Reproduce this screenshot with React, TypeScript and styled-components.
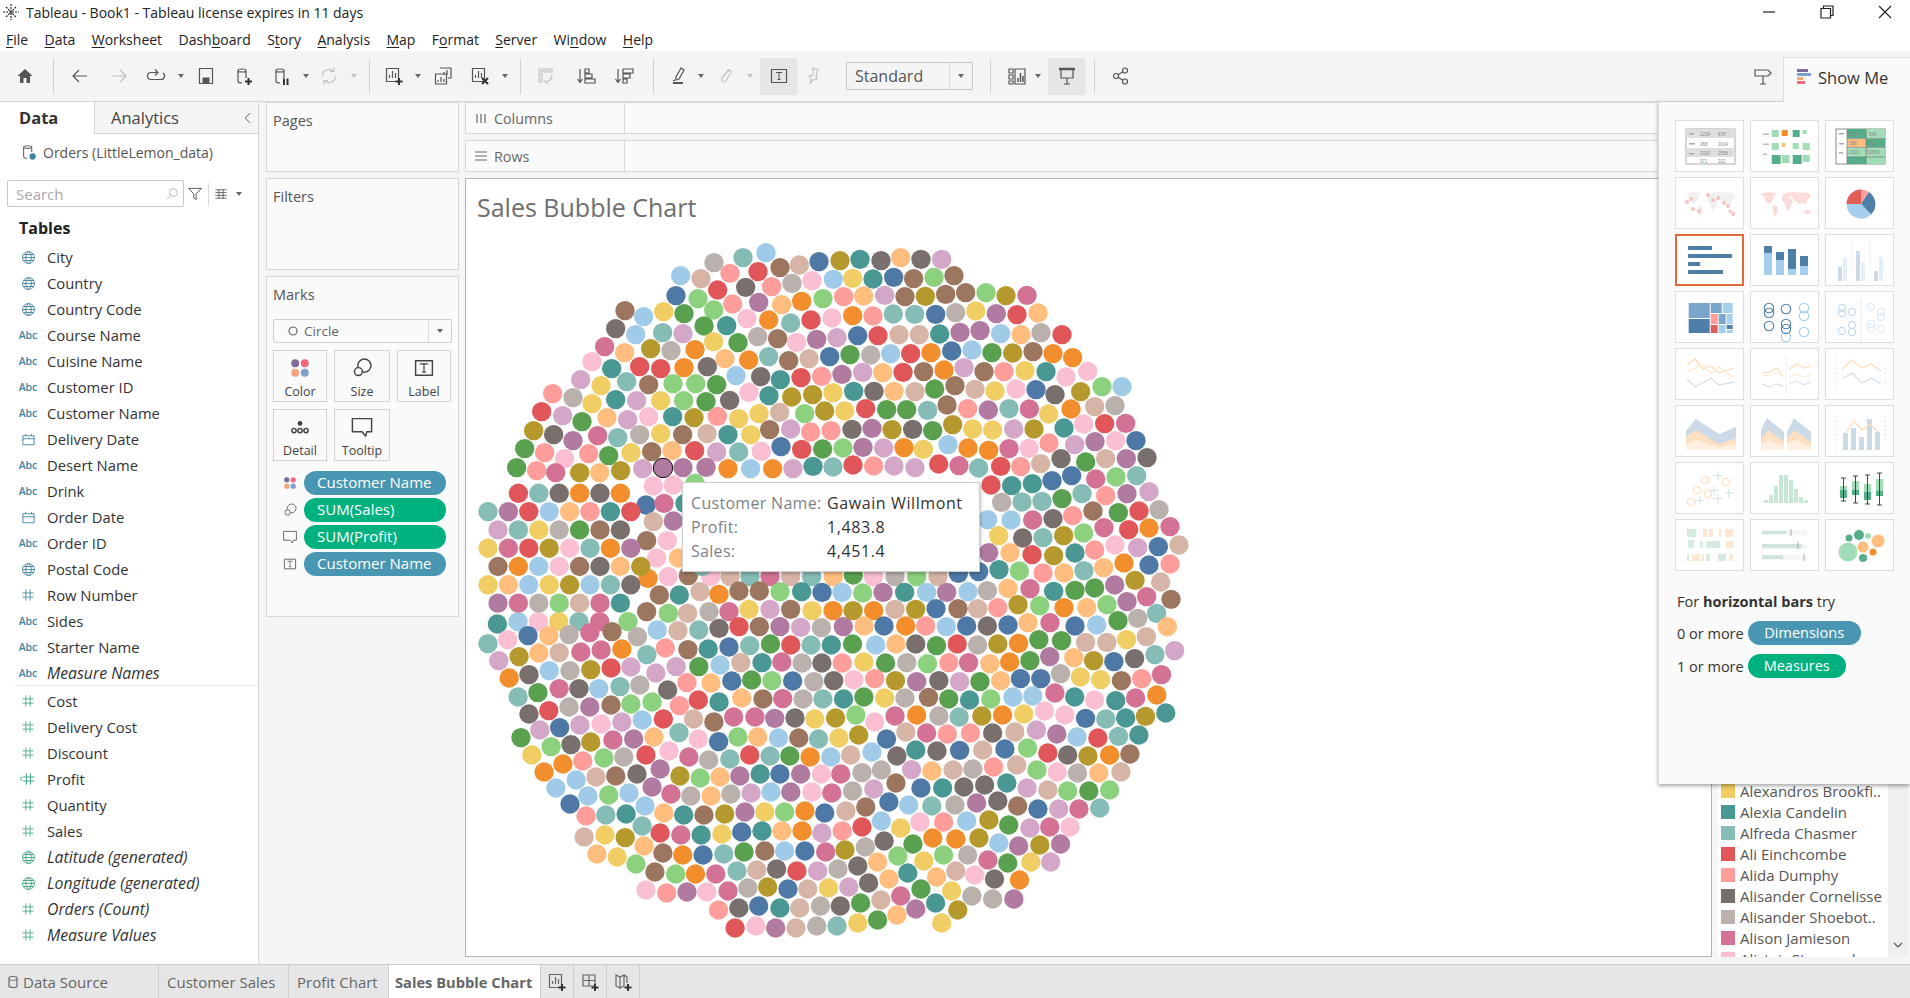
import React from 'react';
import styled, { createGlobalStyle } from 'styled-components';

const Global = createGlobalStyle`
    html, body { margin: 0; padding: 0; background: #fff; }
    body { font-family: 'Open Sans', 'Liberation Sans', sans-serif; overflow: hidden; }
`;

const Page = styled.div`
    width: 1910px;
    height: 998px;
    display: flex;
    flex-direction: column;
    position: relative;
    overflow: hidden;
    color: #333;
`;

const Svg = styled.svg`
    display: block;
    flex: none;
    fill: none;
    stroke: currentColor;
    stroke-width: 1.2;
`;

const Spacer = styled.span<{ $w: number }>`
    width: ${({ $w }) => $w}px;
    flex: none;
`;

/* title bar + menu */
const TitleBar = styled.div`
    height: 24px;
    display: flex;
    align-items: center;
    padding: 0 18px 0 2px;
    font-size: 14px;
    color: #222;
`;
const TitleText = styled.span`
    margin-left: 6px;
    flex: 1;
`;
const WinBtns = styled.div`
    display: flex;
    gap: 44px;
    color: #222;
`;
const Menu = styled.div`
    height: 27px;
    box-sizing: border-box;
    padding: 4px 0 0 6px;
    display: flex;
    align-items: center;
    gap: 16.4px;
    font-size: 14px;
    color: #222;
    u { text-underline-offset: 2px; }
`;

/* toolbar */
const Toolbar = styled.div`
    height: 51px;
    box-sizing: border-box;
    background: #f4f4f4;
    border-bottom: 1px solid #d6d6d6;
    display: flex;
    align-items: center;
    color: #555;
`;
const Slot = styled.div<{ $w: number; $off?: boolean; $on?: boolean }>`
    width: ${({ $w }) => $w}px;
    height: 37px;
    flex: none;
    display: flex;
    align-items: center;
    justify-content: center;
    color: ${({ $off }) => ($off ? '#c2c2c2' : '#555')};
    background: ${({ $on }) => ($on ? '#e6e6e6' : 'transparent')};
`;
const Sep = styled.span`
    width: 1px;
    height: 35px;
    background: #d2d2d2;
`;
const Caret = styled.span<{ $off?: boolean }>`
    width: 0;
    height: 0;
    flex: none;
    border-left: 3.5px solid transparent;
    border-right: 3.5px solid transparent;
    border-top: 4px solid ${({ $off }) => ($off ? '#c2c2c2' : '#666')};
`;
const Combo = styled.div`
    width: 127px;
    height: 28px;
    margin-left: 15px;
    box-sizing: border-box;
    flex: none;
    border: 1px solid #c8c8c8;
    border-radius: 2px;
    display: flex;
    align-items: center;
    font-size: 16px;
    color: #555;
`;
const ComboText = styled.span`
    flex: 1;
    padding-left: 8px;
`;
const ComboCaret = styled.span`
    width: 22px;
    height: 100%;
    border-left: 1px solid #dcdcdc;
    display: flex;
    align-items: center;
    justify-content: center;
`;
const Spring = styled.div`
    flex: 1;
`;
const ShowMeTab = styled.div`
    width: 127px;
    height: 45px;
    margin-top: 6px;
    align-self: flex-start;
    box-sizing: border-box;
    background: #fafafa;
    border-left: 1px solid #ddd;
    border-top: 1px solid #ddd;
    display: flex;
    align-items: center;
    gap: 5px;
    padding: 0 0 6px 11px;
    font-size: 16.5px;
    color: #333;
    flex: none;
    position: relative;
    z-index: 3;
`;

/* main */
const Main = styled.div`
    height: 862px;
    display: grid;
    grid-template-columns: 259px 206px 1fr;
    background: #f5f5f5;
`;
const DataPanel = styled.div`
    background: #fff;
    border-right: 1px solid #d4d4d4;
    display: flex;
    flex-direction: column;
    min-height: 0;
`;
const TabsRow = styled.div`
    height: 32px;
    display: flex;
    flex: none;
`;
const DataTab = styled.div`
    width: 94px;
    padding-left: 19px;
    box-sizing: border-box;
    font-size: 16.5px;
    font-weight: 700;
    color: #333;
    line-height: 31px;
`;
const AnalyticsTab = styled.div`
    flex: 1;
    box-sizing: border-box;
    padding-left: 16px;
    padding-right: 3px;
    background: #f5f5f5;
    border-left: 1px solid #d4d4d4;
    border-bottom: 1px solid #d4d4d4;
    font-size: 16.5px;
    color: #444;
    line-height: 31px;
    display: flex;
    justify-content: space-between;
    align-items: center;
`;
const SourceRow = styled.div`
    height: 36px;
    display: flex;
    align-items: center;
    gap: 5px;
    padding-left: 20px;
    font-size: 14px;
    color: #555;
    flex: none;
`;
const SearchRow = styled.div`
    height: 27px;
    margin: 10px 0 0 7px;
    display: flex;
    align-items: center;
    flex: none;
    color: #555;
`;
const SearchBox = styled.div`
    width: 177px;
    height: 27px;
    box-sizing: border-box;
    border: 1px solid #c8c8c8;
    border-radius: 2px;
    display: flex;
    align-items: center;
    justify-content: space-between;
    padding: 0 4px 0 8px;
    font-size: 15px;
    color: #aaa;
`;
const SearchSep = styled.span`
    width: 1px;
    height: 22px;
    background: #d8d8d8;
    margin: 0 5px;
`;
const GroupTitle = styled.div`
    margin: 9px 0 4px 19px;
    font-size: 16px;
    font-weight: 700;
    color: #222;
    line-height: 24px;
    flex: none;
`;
const FieldRow = styled.div<{ $italic?: boolean; $rule?: boolean }>`
    height: 26px;
    flex: none;
    display: flex;
    align-items: center;
    margin-left: 15px;
    font-size: ${({ $italic }) => ($italic ? 15.8 : 14.8)}px;
    color: #333;
    font-style: ${({ $italic }) => ($italic ? 'italic' : 'normal')};
    box-sizing: border-box;
    border-bottom: ${({ $rule }) => ($rule ? '1px solid #e3e3e3' : 'none')};
    margin-bottom: ${({ $rule }) => ($rule ? 2 : 0)}px;
`;
const FieldIcon = styled.span<{ $green?: boolean }>`
    width: 32px;
    flex: none;
    display: flex;
    justify-content: center;
    padding-right: 6px;
    box-sizing: border-box;
    font-size: 10.5px;
    font-weight: 600;
    font-style: normal;
    color: ${({ $green }) => ($green ? '#3da583' : '#3f83a3')};
`;

const MidColumn = styled.div`
    display: flex;
    flex-direction: column;
    gap: 6px;
    padding: 0 6px 0 7px;
`;
const Card = styled.div<{ $h: number }>`
    height: ${({ $h }) => $h}px;
    box-sizing: border-box;
    background: #fafafa;
    border: 1px solid #d8d8d8;
    padding: 8px 6px 0;
    font-size: 14.5px;
    color: #555;
    flex: none;
`;
const CardTitle = styled.div`
    line-height: 20px;
`;
const MarkSelect = styled.div`
    height: 24px;
    margin-top: 14px;
    box-sizing: border-box;
    border: 1px solid #d0d0d0;
    border-radius: 2px;
    display: flex;
    align-items: center;
    padding-left: 14px;
    gap: 6px;
    font-size: 13.5px;
    color: #666;
`;
const MarkSelectCaret = styled.span`
    margin-left: auto;
    width: 22px;
    height: 100%;
    border-left: 1px solid #dcdcdc;
    display: flex;
    align-items: center;
    justify-content: center;
`;
const MarkGrid = styled.div`
    display: grid;
    grid-template-columns: 54px 56px 54px;
    grid-auto-rows: 52px;
    gap: 7px;
    margin-top: 7px;
`;
const MarkBtn = styled.div`
    border: 1px solid #d4d4d4;
    display: flex;
    flex-direction: column;
    align-items: center;
    justify-content: flex-start;
    padding-top: 5px;
    gap: 3px;
    font-size: 12.5px;
    color: #444;
`;
const PillRows = styled.div`
    display: flex;
    flex-direction: column;
    gap: 3px;
    margin-top: 10px;
`;
const PillRow = styled.div`
    display: flex;
    align-items: center;
    height: 24px;
`;
const PillIcon = styled.span`
    width: 31px;
    display: flex;
    justify-content: center;
    padding-left: 3px;
    box-sizing: border-box;
    color: #666;
`;
const Pill = styled.span<{ $measure?: boolean }>`
    width: 142px;
    height: 24px;
    border-radius: 12px;
    background: ${({ $measure }) => ($measure ? '#00b180' : '#4996b2')};
    color: #fff;
    font-size: 15px;
    line-height: 23px;
    padding-left: 13px;
    box-sizing: border-box;
`;

const Work = styled.div`
    display: flex;
    flex-direction: column;
    min-width: 0;
    gap: 6px;
`;
const Shelves = styled.div`
    display: flex;
    flex-direction: column;
    gap: 6px;
`;
const Shelf = styled.div`
    height: 32px;
    box-sizing: border-box;
    background: #fafafa;
    border-top: 1px solid #d8d8d8;
    border-bottom: 1px solid #d8d8d8;
    border-left: 1px solid #d8d8d8;
    display: flex;
    flex: none;
`;
const ShelfLabel = styled.div`
    width: 159px;
    box-sizing: border-box;
    border-right: 1px solid #d8d8d8;
    display: flex;
    align-items: center;
    gap: 6px;
    padding-left: 8px;
    font-size: 14.3px;
    color: #666;
`;
const Stage = styled.div`
    display: flex;
    gap: 6px;
    height: 779px;
    flex: none;
`;
const Canvas = styled.div`
    width: 1247px;
    flex: none;
    box-sizing: border-box;
    background: #fff;
    border: 1px solid #b4b4b4;
    position: relative;
    overflow: hidden;
`;
const ChartTitle = styled.div`
    height: 62px;
    box-sizing: border-box;
    padding: 9px 0 0 11px;
    font-size: 25px;
    line-height: 38px;
    color: #6e6e6e;
`;
const Tip = styled.div`
    position: absolute;
    left: 216px;
    top: 303px;
    width: 298px;
    height: 90px;
    box-sizing: border-box;
    background: #fff;
    border: 1px solid #cfcfcf;
    box-shadow: 1px 2px 3px rgba(0, 0, 0, 0.25);
    padding: 8px 8px 0;
    display: grid;
    grid-template-columns: 136px 1fr;
    grid-auto-rows: 24px;
    align-items: center;
    font-size: 16px;
    letter-spacing: 0.3px;
    color: #7d828a;
`;
const TipValue = styled.span`
    color: #333;
    letter-spacing: 0.6px;
`;
const Legend = styled.div`
    width: 190px;
    flex: none;
    background: #fff;
    display: flex;
    overflow: hidden;
    position: relative;
`;
const LegendList = styled.div`
    flex: 1;
    padding: 602px 0 0 3px;
`;
const LegendRow = styled.div`
    height: 21px;
    display: flex;
    align-items: center;
    gap: 5px;
    font-size: 15px;
    color: #555;
    white-space: nowrap;
`;
const Swatch = styled.span<{ $c: string }>`
    width: 14px;
    height: 14px;
    flex: none;
    background: ${({ $c }) => $c};
`;
const ScrollBar = styled.div`
    width: 20px;
    background: #efefef;
    display: flex;
    align-items: flex-end;
    justify-content: center;
    padding-bottom: 6px;
    box-sizing: border-box;
    color: #555;
`;

/* show me overlay */
const ShowMe = styled.div`
    position: absolute;
    left: 1658px;
    top: 102px;
    width: 252px;
    height: 682px;
    box-sizing: border-box;
    background: #fafafa;
    border-left: 1px solid #ddd;
    box-shadow: 0 2px 4px rgba(0, 0, 0, 0.35);
    padding: 18px 0 0 16px;
    z-index: 2;
    font-size: 14.5px;
    color: #333;
`;
const ThumbGrid = styled.div`
    display: grid;
    grid-template-columns: repeat(3, 69px);
    grid-auto-rows: 52px;
    gap: 5px 6px;
`;
const Thumb = styled.div<{ $on?: boolean }>`
    box-sizing: border-box;
    background: #fff;
    border: ${({ $on }) => ($on ? '2px solid #e0683a' : '1px solid #dedede')};
    overflow: hidden;
`;
const ThumbArt = styled.svg`
    display: block;
    width: 69px;
    height: 52px;
`;
const Hint = styled.div`
    margin: 21px 0 1px 2px;
    line-height: 20px;
    b { font-weight: 700; }
`;
const HintRow = styled.div`
    display: flex;
    align-items: center;
    height: 24px;
    margin: 9px 0 0 2px;
`;
const HintPill = styled.span<{ $measure?: boolean; $w: number }>`
    width: ${({ $w }) => $w}px;
    height: 24px;
    margin-left: 4px;
    border-radius: 12px;
    background: ${({ $measure }) => ($measure ? '#00b180' : '#4996b2')};
    color: #fff;
    text-align: center;
    line-height: 23px;
    font-size: 14.5px;
`;

/* sheet tabs */
const SheetTabs = styled.div`
    height: 34px;
    box-sizing: border-box;
    background: #e6e6e6;
    border-top: 1px solid #cdcdcd;
    display: flex;
`;
const SheetTab = styled.div<{ $w: number; $on?: boolean }>`
    width: ${({ $w }) => $w}px;
    flex: none;
    box-sizing: border-box;
    display: flex;
    align-items: center;
    gap: 5px;
    padding-left: ${({ $on }) => ($on ? 6 : 8)}px;
    background: ${({ $on }) => ($on ? '#fff' : 'transparent')};
    border-right: 1px solid #cfcfcf;
    font-size: ${({ $on }) => ($on ? 14.7 : 15)}px;
    font-weight: ${({ $on }) => ($on ? 700 : 400)};
    color: #666;
`;
const AddTab = styled.div`
    width: 32px;
    flex: none;
    border-right: 1px solid #cfcfcf;
    display: flex;
    align-items: center;
    justify-content: center;
    color: #666;
`;

/* icons */
const Icon = ({ s = 20, sw = 1.2, children }: { s?: number; sw?: number; children: React.ReactNode }) => (
    <Svg width={s} height={s} viewBox="0 0 20 20" strokeWidth={sw}>
        {children}
    </Svg>
);
const Home = () => <Icon><path d="M10 3 2.5 10H5v7h3.5v-5h3v5H15v-7h2.5z" fill="currentColor" stroke="none" /></Icon>;
const Back = () => <Icon sw={1.6}><path d="M17 10H3.5M9 4l-6 6 6 6" /></Icon>;
const Fwd = () => <Icon sw={1.6}><path d="M3 10h13.5M11 4l6 6-6 6" /></Icon>;
const Cycle = () => <Icon><path d="M11 6.500H5a3.500 3.500 0 0 0 0 7h10a3.500 3.500 0 0 0 2-6.400M9 3.500l3 3-3 3" /></Icon>;
const Save = () => <Icon><path d="M3.500 2.500h13v15h-13z" /><path d="M6.500 11.500h7v6h-7z" fill="currentColor" stroke="none" /></Icon>;
const Db = ({ mark }: { mark: 'plus' | 'pause' }) => (
    <Icon>
        <path d="M4 4.500C4 2.500 12 2.500 12 4.500V12M4 4.500C4 6.500 12 6.500 12 4.500M4 4.500V15c0 1.500 2 2 4 2" />
        {mark === 'plus'
            ? <path d="M14.500 12v7M11 15.500h7" strokeWidth={2} stroke="#333" />
            : <path d="M12 12.500V19M15.500 12.500V19" strokeWidth={2} stroke="#333" />}
    </Icon>
);
const Refresh = () => <Icon><path d="M3.500 10a6.500 6.500 0 0 1 11-4.700M16.500 10a6.500 6.500 0 0 1-11 4.700M15 1.500v4h-4M5 18.500v-4h4" /></Icon>;
const NewSheet = () => <Icon><path d="M2.500 2.500h12v13h-12zM5.500 12V9M8.500 12V5M11.500 12V7" /><path d="M15 12v7M11.500 15.500h7" strokeWidth={2} stroke="#333" /></Icon>;
const DupSheet = () => <Icon><path d="M7 2h11v10H15M2.500 8h11v10h-11zM5 16v-2M8 16v-5M11 16v-3M11 9V6M14 9V4" /></Icon>;
const ClearSheet = () => <Icon><path d="M2.500 2.500h12v13h-12zM5.500 12V9M8.500 12V5M11.500 12V7" /><path d="m12 12 6 6M18 12l-6 6" strokeWidth={2} stroke="#333" /></Icon>;
const SwapAxes = () => <Icon><path d="M3 3h3v3H3zM8 3h3v3H8zM13 3h3v3h-3zM3 8h3v3H3zM3 13h3v3H3zM16 9c0 4-2 6-6 7M8 14l2 2.500L12 18" /></Icon>;
const SortAsc = () => <Icon sw={1.3}><path d="M4 3v13M1.500 13 4 16.500 6.500 13" /><path d="M9 3h4v4H9zM9 8h7v4H9zM9 13h10v4H9z" /></Icon>;
const SortDesc = () => <Icon sw={1.3}><path d="M4 3v13M1.500 13 4 16.500 6.500 13" /><path d="M9 3h10v4H9zM9 8h7v4H9zM9 13h4v4H9z" /></Icon>;
const Marker = () => <Icon><path d="m11 2 3 2-5 9-3 1v-3zM3 15l2-1" /><path d="M3 17h10" strokeWidth={2} /></Icon>;
const Clip = () => <Icon><path d="M13 3 6 12c-2 3 2 5 3.500 3L15 7c1-2-1.500-3.500-3-2L6.500 12" /></Icon>;
const TBox = () => <Icon sw={1.3}><path d="M2.500 3.500h15v13h-15z" /><path d="M7 7V6.500h6V7M10 6.500v7M8.500 13.500h3" strokeWidth={1} /></Icon>;
const Pin = () => <Icon><path d="m9 2 5 2-2 6 1 3-4 1-3 4 1-5-2-3 4-1z" /></Icon>;
const Fit = () => <Icon><path d="M2 3h4v4H2zM2 9h4v4H2zM2 15h4v3H2zM8 3h10v15H8z" /><path d="M11 16v-4M13.500 16V7M16 16v-6" strokeWidth={1.500} /></Icon>;
const Present = () => <Icon sw={1.5}><path d="M2 3h16" strokeWidth={2.500} /><path d="M4 3v9h12V3M10 12v6M7 18h6" /></Icon>;
const Share = () => <Icon><circle cx="14" cy="4.500" r="2.500" /><circle cx="14" cy="15.500" r="2.500" /><circle cx="5" cy="10" r="2.500" /><path d="m7 8.800 5-3M7 11.200l5 3" /></Icon>;
const Sign = () => <Icon><path d="M2 4h13l3 3-3 3H2zM10 10v8M7 18h6" /></Icon>;
const Funnel = () => <Icon s={16}><path d="M2 3h16l-6.500 7v7l-3-2v-5z" /></Icon>;
const Lens = () => <Icon s={14} sw={1.500}><path d="m3 17 4-4" /><circle cx="12" cy="8" r="5.500" /></Icon>;
const Lines = () => <Icon s={14} sw={1.300}><path d="M2 4h16M2 8h16M2 12h16M2 16h16M7 3v14M13 3v14" /></Icon>;
const Chevron = () => <Icon s={14} sw={1.200}><path d="m13 3-7 7 7 7" /></Icon>;
const Globe = () => <Icon s={15} sw={1.300}><circle cx="10" cy="10" r="8" /><path d="M2 10h16M3 6h14M3 14h14M10 2c-5 5-5 11 0 16M10 2c5 5 5 11 0 16" /></Icon>;
const Calendar = () => <Icon s={15} sw={1.400}><path d="M2.500 5h15v12h-15zM2.500 9h15M6 2.500V5M14 2.500V5" /></Icon>;
const Hash = () => <Icon s={14} sw={1.400}><path d="M7 2v16M13 2v16M2 7h16M2 13h16" /></Icon>;
const CalcHash = () => <Icon s={16} sw={1.300}><path d="M8 3v14M13 3v14M4 7.500h14M4 12.500h14M0 8h3M0 11h3" /></Icon>;
const Orders = () => (
    <Icon s={18}>
        <path d="M4 4.500C4 2.500 13 2.500 13 4.500V10M4 4.500C4 6.500 13 6.500 13 4.500M4 4.500V15c0 1.500 2 2 4 2" stroke="#666" />
        <circle cx="14" cy="15" r="3.500" fill="#3f83a3" stroke="none" />
    </Icon>
);
const Dots = ({ s = 20 }: { s?: number }) => (
    <Svg width={s} height={s} viewBox="0 0 20 20" stroke="none">
        <circle cx="6" cy="6" r="3.300" fill="#7f6a9a" stroke="none" />
        <circle cx="14" cy="6" r="3.300" fill="#f0697c" stroke="none" />
        <circle cx="6" cy="14" r="3.300" fill="#f4a77d" stroke="none" />
        <circle cx="14" cy="14" r="3.300" fill="#7fa1cf" stroke="none" />
    </Svg>
);
const SizeIco = ({ s = 20 }: { s?: number }) => <Icon s={s} sw={1.300}><circle cx="12" cy="8" r="5.500" /><circle cx="7" cy="13" r="3.300" fill="#fafafa" /></Icon>;
const TipIco = ({ s = 20 }: { s?: number }) => <Icon s={s} sw={1.300}><path d="M2 3h16v11h-4l-1 3.500-3-3.500H2z" /></Icon>;
const LabelIco = ({ s = 20 }: { s?: number }) => <Icon s={s} sw={1.300}><path d="M3 4h14v12H3z" /><path d="M7 7V6.500h6V7M10 6.500v7M8.500 13.500h3" strokeWidth={1} /></Icon>;
const DetailIco = () => <Icon s={24} sw={1.100}><circle cx="10" cy="7" r="2" fill="currentColor" stroke="none" /><circle cx="5" cy="13" r="1.800" /><circle cx="10" cy="13" r="1.800" /><circle cx="15" cy="13" r="1.800" /></Icon>;
const BarsIco = () => (
    <Svg width={18} height={18} viewBox="0 0 18 18" stroke="none">
        <path d="M2 1h11v3H2z" fill="#7f6a9a" stroke="none" />
        <path d="M2 5h14v3H2z" fill="#7f9ed0" stroke="none" />
        <path d="M2 9h6v3H2z" fill="#f4a77d" stroke="none" />
        <path d="M2 13h8v3H2z" fill="#f0697c" stroke="none" />
    </Svg>
);
const Logo = () => (
    <Svg width={18} height={18} viewBox="0 0 18 18" stroke="#6ea3c6" strokeWidth={1}>
        <path d="M9 1v16M1 9h16M4 4l10 10M14 4 4 14" strokeDasharray="2 1" />
    </Svg>
);

/* thumbnails */
const dk = '#4e7fa8', lt = '#a4cdee', gd = '#54ae8a', gl = '#a0dcb5', ft = '#ccdae8', fl = '#e2eef9', og = '#fde0c2';
const tinyText = { fontSize: 4.5, fill: '#888', stroke: 'none', fontFamily: "'Liberation Sans', sans-serif" } as const;
const worldPath = 'M9 16l8-2 8 1-3 6-3 5-4-2-2-5zM22 27l5 2-1 6-2 5-2-6zM32 16l6-2 3 3-3 2 4 4-3 8-3 2-2-7-3-4zM40 14l18 1 2 4-4 3-1 5-3-2-3 1-6-4-3-4zM52 33l6-1 2 3-4 2z';
const circles = (list: number[][], c: string, r = 4.7) => list.map(([x, y], i) => <circle key={i} cx={x} cy={y} r={r} fill="none" stroke={c} strokeWidth={1.100} />);
const rects = (list: number[][], c: string) => list.map(([x, y, w, h], i) => <rect key={i} x={x} y={y} width={w} height={h} fill={c} />);

const thumbs: React.ReactNode[] = [
    <>
        <rect x="10" y="8" width="49" height="35" fill="#fff" stroke="#aaa" />
        {rects([[10, 8, 49, 9], [10, 27, 49, 9]], '#dedede')}
        {rects([[13, 12, 5, 1.500], [13, 22, 6, 1.500], [13, 32, 5, 1.500]], '#aaa')}
        <text x="24" y="15" style={tinyText}>1234</text><text x="42" y="15" style={tinyText}>678</text>
        <text x="24" y="25" style={tinyText}>368</text><text x="42" y="25" style={tinyText}>3014</text>
        <text x="24" y="34" style={tinyText}>2020</text><text x="42" y="34" style={tinyText}>2558</text>
        <text x="24" y="42" style={tinyText}>971</text><text x="42" y="42" style={tinyText}>322</text>
    </>,
    <>
        {rects([[12, 12.500, 6, 1.500], [12, 22.500, 6, 1.500], [12, 32.500, 4, 1.500]], '#bbb')}
        {rects([[20.700, 9, 7, 7], [51.700, 9, 4, 4], [20.700, 22, 7, 7], [41.700, 22, 6, 6], [51.700, 22, 7, 7], [30.700, 34, 8, 8], [51.700, 34, 7, 7]], gl)}
        {rects([[41.700, 9, 7, 7], [20.700, 34, 9, 9], [41.700, 34, 9, 9]], gd)}
        <rect x="30.700" y="9" width="6" height="6" fill="#f28e2b" />
        <rect x="30.700" y="22" width="4" height="4" fill="#ffbe7d" />
    </>,
    <>
        <rect x="10" y="8" width="49" height="35" fill="#fff" stroke="#888" />
        {rects([[21, 8, 19, 9], [40, 18, 19, 8], [21, 36, 19, 7]], gd)}
        {rects([[40, 8, 19, 9], [21, 27, 19, 9], [40, 27, 19, 9], [40, 36, 19, 7]], gl)}
        <rect x="21" y="18" width="19" height="8" fill="#ffbe7d" />
        {rects([[13, 12, 5, 1.500], [13, 22, 5, 1.500], [13, 31, 4, 1.500]], '#aaa')}
        <path d="M21 8v35M40 8v35M21 17.500h38M21 26.500h38M21 36h38" stroke="#777" strokeWidth={0.700} />
        <text x="23" y="15" style={tinyText}>1234</text><text x="43" y="15" style={tinyText}>546</text>
        <text x="23" y="24" style={tinyText}>368</text><text x="43" y="24" style={tinyText}>380</text>
        <text x="23" y="33" style={tinyText}>2020</text><text x="41" y="33" style={tinyText}>52800</text>
    </>,
    <>
        <path d={worldPath} fill="#f0f0f0" />
        {[[11, 24], [15, 21], [32, 17], [37, 22], [48, 25], [52, 28], [17, 31], [23, 33], [54, 33], [57, 36], [42, 20]].map(([x, y], i) => <circle key={i} cx={x} cy={y} r={i === 8 ? 1.500 : 2} fill="#f3c2c2" />)}
    </>,
    <path d={worldPath} fill="#fbdcdb" />,
    <>
        <path d="M35 26V11.500A14.500 14.500 0 0 1 43 14z" fill="#ff9d9a" />
        <path d="M35 26 20.500 26A14.500 14.500 0 0 1 35 11.500z" fill="#e15e56" />
        <path d="M35 26 43 14A14.500 14.500 0 0 1 45 36.500z" fill={dk} />
        <path d="M35 26 45 36.500A14.500 14.500 0 0 1 20.500 26z" fill={lt} />
    </>,
    <>{rects([[11, 10, 24, 4], [11, 18, 44, 4], [11, 26, 12, 4], [11, 34, 35, 4]], dk)}</>,
    <>
        {rects([[13, 18, 8, 22], [25, 25, 8, 15], [37, 34, 8, 6], [49, 31, 8, 9]], lt)}
        {rects([[13, 11, 8, 7], [25, 17, 8, 8], [37, 14, 8, 20], [49, 21, 8, 10]], dk)}
    </>,
    <>
        <path d="M26 5v30M44 5v30" stroke="#eee" />
        {rects([[12, 32, 4, 14], [30, 16, 4, 30], [48, 36, 4, 10]], ft)}
        {rects([[17, 23, 4, 23], [35, 27, 4, 19], [53, 22, 4, 24]], fl)}
    </>,
    <>
        {rects([[12.700, 11, 21, 15], [34.700, 11, 11, 10], [42.700, 22, 7, 10]], '#7aa6cb')}
        {rects([[12.700, 27, 21, 14], [50.700, 33, 6, 4]], dk)}
        {rects([[46.700, 11, 10, 10], [50.700, 22, 6, 10], [42.700, 33, 7, 8], [50.700, 38, 6, 3]], lt)}
        <rect x="34.700" y="22" width="7" height="10" fill="#ff9d9a" />
        <rect x="34.700" y="33" width="7" height="8" fill="#e15e56" />
    </>,
    <>
        {circles([[18, 16], [18, 21], [35, 17], [18, 34], [35, 32], [35, 37]], dk)}
        {circles([[53, 16], [53, 24], [53, 40], [35, 45]], lt)}
    </>,
    <>
        <path d="M35 6v44" stroke="#eee" />
        {circles([[16, 16], [16, 21], [26, 20], [16, 39], [26, 33], [26, 40]], '#c5d8ea', 3.600)}
        {circles([[45, 15], [55, 20], [55, 25], [45, 36], [45, 32], [55, 37]], '#dcebf8', 3.600)}
    </>,
    <>
        <path d="M11 16l8-6 8 10 8-3 8 7 15-5" fill="none" stroke="#fbdcb8" strokeWidth={1.300} />
        <path d="M11 23l16-8 8 9 8-6 15 11" fill="none" stroke="#fdeacf" strokeWidth={1.300} />
        <path d="M11 30l8 8 16-9 8 7 15-3" fill="none" stroke="#d3e0ec" strokeWidth={1.300} />
    </>,
    <>
        <path d="M35 6v39" stroke="#eee" />
        <path d="M11 24l8-1 7-4 6 8M38 20l8-5 7 4 7-2" fill="none" stroke="#fbdcb8" strokeWidth={1.100} />
        <path d="M11 27l8-1 7-3 6 5M38 28l8-3 7 3 7-2" fill="none" stroke="#fdeacf" strokeWidth={1.100} />
        <path d="M11 35l7 3 7-3 7 2M38 35l8-3 7 4 7-3" fill="none" stroke="#d3e0ec" strokeWidth={1.100} />
    </>,
    <>
        <path d="M10 10v32M59 10v32" stroke="#eee" strokeDasharray="1.500 3" strokeWidth={2} />
        <path d="M16 20l10-9 10 8 9-4 10 7" fill="none" stroke="#fbdcb8" strokeWidth={1.300} />
        <path d="M16 30l10-6 10 10 9-5 10 6" fill="none" stroke="#d3e0ec" strokeWidth={1.300} />
    </>,
    <>
        <path d="M10 25 20 13 43 28 60 21V44H10z" fill={ft} />
        <path d="M10 31 20 24 43 38 60 32V44H10z" fill={og} />
        <path d="M10 38 20 34 43 41 60 38V44H10z" fill="#fef0e0" />
    </>,
    <>
        <path d="M10 24l6-12 17 14v18H10z" fill={ft} />
        <path d="M10 33l7-9 16 12v8H10z" fill={og} />
        <path d="M10 38l6-4 17 6v4H10z" fill="#fef0e0" />
        <path d="M36 26l7-14 17 14v18H36z" fill={ft} />
        <path d="M36 33l7-9 17 12v8H36z" fill={og} />
        <path d="M36 38l7-4 17 6v4H36z" fill="#fef0e0" />
    </>,
    <>
        <path d="M10 10v33M59 10v33" stroke="#eee" strokeDasharray="1.500 3" strokeWidth={2} />
        {rects([[17, 27, 5, 17], [25, 22, 5, 22], [33, 31, 5, 13], [41, 13, 5, 31], [49, 26, 5, 18]], ft)}
        <path d="M19 28l9-13 8 9 8-6 8 8" fill="none" stroke="#fbdcb8" strokeWidth={1.300} />
    </>,
    <>
        {circles([[29, 17], [21, 27], [32, 31], [15, 39], [50, 19]], '#fde0c2', 3.500)}
        <path d="M42 8v9M37 12.500h9M38 23v9M33 27.500h9M24 33v9M19 37.500h9M42 31v9M37 35.500h9M53 26v9M49 30h9" stroke="#cfe7db" strokeWidth={1.100} />
    </>,
    <>{rects([[13, 37, 4, 3], [18, 32, 4, 8], [23, 23, 4, 17], [28, 12, 4, 28], [33, 12, 4, 28], [38, 17, 4, 23], [43, 26, 4, 14], [48, 34, 4, 6], [53, 37, 4, 3]], '#c8e6d6')}</>,
    <>
        {rects([[14, 23, 7, 12], [26, 18, 7, 14], [38, 21, 7, 16], [50, 16, 7, 17]], gl)}
        {rects([[14, 27, 7, 8], [26, 27, 7, 5], [38, 29, 7, 8], [50, 28, 7, 5]], gd)}
        <path d="M17.500 15v23M15 15h5M15 38h5M29.500 13v27M27 13h5M27 40h5M41.500 12v29M39 12h5M39 41h5M53.500 10v32M51 10h5M51 42h5" stroke="#333" strokeWidth={0.900} />
    </>,
    <>
        {rects([[11, 9, 9, 8], [12, 20, 6, 8], [11, 34, 2, 7], [42, 34, 8, 7], [30, 21, 14, 7], [24, 21, 3, 7], [30, 34, 4, 7]], '#d5ebe0')}
        {rects([[27, 9, 4, 8], [33, 9, 4, 8], [43, 9, 2, 8], [49, 9, 8, 8], [50, 21, 8, 7], [16, 34, 8, 7], [26, 34, 2, 7], [53, 34, 4, 7]], '#fde7d2')}
    </>,
    <>
        {rects([[11, 10, 45, 5], [11, 24, 45, 5], [11, 35, 45, 5]], '#f5f5f5')}
        {rects([[11, 11, 25, 3], [11, 24, 40, 4], [11, 35, 21, 4]], '#cfe5da')}
        <path d="M40 9v7M47 22v7M53 34v7" stroke="#aaa" />
    </>,
    <>
        <circle cx="22" cy="32" r="9.500" fill={gl} />
        <circle cx="23" cy="18" r="3.500" fill={gd} />
        <circle cx="33" cy="15" r="5" fill={gd} />
        <circle cx="42" cy="16" r="3" fill={gl} />
        <circle cx="37" cy="27" r="5.500" fill="#ffbe7d" />
        <circle cx="52" cy="21" r="6.500" fill="#ffbe7d" />
        <circle cx="47" cy="32" r="3.500" fill="#f28e2b" />
        <circle cx="37" cy="38" r="4" fill={gd} />
    </>,
];

/* the bubble chart: read off the reference, sheet coordinates */
const palette: Record<string, string> = {
    b: '#4e79a7', B: '#a0cbe8', o: '#f28e2b', O: '#ffbe7d', g: '#59a14f', G: '#8cd17d', y: '#b6992d', Y: '#f1ce63', t: '#499894', T: '#86bcb6',
    r: '#e15759', R: '#ff9d9a', k: '#79706e', K: '#bab0ac', m: '#d37295', M: '#fabfd2', p: '#b07aa1', P: '#d4a6c8', n: '#9d7660', N: '#d7b5a6',
};
const palKeys = Object.keys(palette).join('');

const upperRight = '42 98 K,129 83 T,198 68 B,298 105 N,240 113 n,357 95 b,420 92 y,480 88 t,543 92 k,602 83 O,663 88 k,725 88 P,90 130 R,174 125 r,400 148 B,336 152 M,458 145 Y,519 147 t,581 142 b,641 146 n,702 142 G,762 137 n,53 180 r,137 172 k,215 170 R,276 160 K,858 188 G,918 197 y,981 196 m,797 188 n,737 193 n,676 199 y,615 200 n,554 196 P,491 198 O,431 200 R,369 206 G,305 214 o,245 224 O,176 217 p,98 222 R,41 240 G,1014 249 O,951 254 r,889 251 p,827 243 Y,767 248 K,707 253 b,644 253 T,580 252 T,519 258 R,458 257 o,396 264 M,333 270 r,272 279 T,206 270 o,141 266 M,80 287 t,12 288 g,1086 314 r,1023 308 K,963 314 O,902 311 B,840 302 p,780 307 p,719 312 t,658 314 N,597 314 N,534 317 r,473 317 b,411 323 P,350 328 p,290 337 M,233 326 n,173 320 K,114 338 g,41 335 Y,1118 383 o,1059 371 o,999 365 n,938 369 y,876 368 g,816 360 B,755 363 b,693 368 o,632 371 r,572 371 B,512 375 K,450 374 g,389 380 b,327 386 N,266 392 n,206 380 T,146 390 o,75 386 O,22 410 k,1163 424 M,1098 441 M,1038 425 t,975 422 Y,912 425 R,852 425 n,792 413 P,732 420 o,671 425 n,609 427 r,548 428 O,488 427 P,426 433 p,365 439 R,303 443 r,241 449 t,182 440 k,108 437 B,50 464 g,1266 470 B,1206 470 G,1142 485 y,1065 494 k,1008 479 b,948 477 M,885 483 Y,825 478 N,765 467 n,704 477 g,645 485 N,582 484 O,522 484 k,461 484 t,399 488 Y,338 494 y,275 501 y,207 497 t,147 487 M,89 511 k,18 515 g,1245 527 K,1184 530 N,1113 537 o,1046 552 Y,988 537 m,927 536 T,865 540 p,803 536 R,741 525 n,683 541 T,620 539 g,560 539 g,497 536 r,434 543 Y,374 543 y,314 551 G,239 547 N,177 551 Y,116 566 Y,52 559 R,1277 580 m,1214 581 r,1151 582 M,1092 594 t,1002 597 y,941 597 P,878 600 Y,818 597 Y,758 584 y,698 602 g,638 598 k,576 599 y,516 595 p,456 598 k,393 602 R,332 606 R,272 597 P,209 599 n,152 614 Y,84 614 t,21 611 N,1308 632 b,1247 632 M,1185 635 p,1124 644 P,1047 639 R,987 655 M,927 656 m,866 661 o,804 654 o,744 644 B,670 658 Y,612 653 o,551 654 P,489 652 p,429 654 G,368 657 g,305 658 r,243 650 b,184 664 M,116 666 T,50 666 P,1341 683 k,1279 686 p,1217 686 N,1157 696 g,1083 686 k,1022 701 N,962 710 R,902 709 r,836 714 T,777 707 m,716 702 r,645 713 P,582 708 P,521 708 R,459 705 r,399 711 T,339 709 t,279 716 P,218 716 o,152 716 B,84 716 o,18 712 p,1310 737 T,1248 741 G,1187 747 m,1115 737 b,1056 752 b,997 761 t,935 767 t,873 765 r,1347 785 P,1281 791 p,1217 797 R,1146 791 T,1086 806 g,1026 814 T,966 816 T,905 817 K,1377 839 K,1317 843 r,1255 848 g,1179 843 n,1118 857 R,1059 866 k,998 870 m,933 870 B,863 869 B,1410 890 m,1347 894 o,1286 899 r,1212 893 m,1151 909 G,1091 917 y,1029 923 T,968 924 k,896 917 Y,1437 945 N,1375 950 b,1313 953 P,1245 945 M,1184 960 R,1125 969 t,1061 977 y,996 974 r,930 968 O,866 968 p,1410 1002 R,1347 1005 b,1272 999 o,1211 1013 O,1152 1022 T,1092 1029 O,1029 1029 R,958 1023 G,897 1019 t,836 1025 b,32 1040 M,90 1040 N,150 1040 T,210 1040 m,272 1040 N,335 1040 T,400 1040 O,460 1035 g,520 1040 M,585 1040 K,650 1040 G,714 1040 N,775 1030 b,0 1085 N,57 1093 o,117 1083 n,178 1083 n,240 1085 G,305 1085 t,366 1087 b,426 1087 B,488 1089 G,549 1087 p,614 1087 t,680 1087 B,740 1087 p,804 1085 B,862 1082 K,924 1075 O,990 1076 m,1061 1084 t,1125 1081 g,1184 1074 g,1244 1065 p,1305 1051 y,1382 1056 N,27 1145 K,87 1145 m,147 1138 Y,210 1138 P,272 1138 n,336 1142 Y,399 1142 o,459 1142 y,521 1142 o,585 1138 N,647 1138 y,708 1136 b,774 1136 n,833 1136 N,893 1133 R,954 1124 y,1019 1127 G,1092 1133 o,1160 1133 O,1221 1124 G,1281 1115 p,1340 1100 m,1413 1108 n,57 1195 k,117 1190 r,178 1190 n,240 1190 p,430 1190 p,492 1188 O,552 1188 b,617 1188 o,677 1188 R,739 1190 B,800 1188 b,862 1188 k,924 1185 b,984 1178 O,1050 1178 m,1125 1188 b,1190 1185 B,1254 1172 g,1313 1165 K,1370 1150 T,1402 1190 O';
const upperLeft = '662 137 B,723 146 N,648 197 b,714 206 G,495 242 n,551 260 B,611 245 Y,672 251 g,467 296 k,527 314 B,608 308 T,669 311 P,722 287 g,434 350 m,494 368 O,572 356 y,633 362 K,705 359 o,396 395 M,455 416 t,539 410 r,602 416 r,672 413 o,362 449 P,423 467 Y,500 455 T,566 464 n,639 461 G,707 461 G,278 491 R,339 503 K,396 521 Y,467 509 t,530 512 P,602 512 Y,671 512 G,245 545 r,308 557 P,366 575 g,441 563 O,503 569 P,566 560 M,638 560 t,702 563 y,221 602 y,281 614 k,339 632 p,413 617 m,473 623 T,539 614 K,602 611 Y,668 614 n,194 656 g,254 668 R,314 686 M,386 671 R,446 677 g,513 668 Y,575 665 n,636 662 O,704 662 r,170 713 g,230 722 R,287 728 m,359 728 y,419 728 O,482 722 y,548 716 P,608 713 p,669 713 p';
const tooltipEdge = '35 33 n,95 33 O,165 33 r,15 90 P,130 85 p,40 138 M,100 135 M,165 130 G,18 195 b,72 190 m,135 190 t,40 245 N,100 243 p,20 302 n,82 302 M,50 354 M,115 354 O,24 415 o,85 410 M,145 407 n,58 465 n,118 465 t,178 460 N,20 515 n,85 520 G,143 520 N';
const lower = '58 12 t,102 5 B,145 5 M,188 5 Y,231 5 T,275 5 m,335 5 G,397 30 B,441 32 N,485 30 T,527 27 k,570 27 r,612 22 n,658 22 p,701 22 P,745 23 K,788 23 k,834 27 O,881 25 b,923 25 o,966 22 R,1009 23 B,1054 22 p,1098 22 k,1140 22 b,1182 12 O,1231 12 m,1282 17 b,1331 17 B,1373 5 g,1415 5 K,1456 2 T,38 71 T,80 59 M,123 47 b,167 47 O,210 44 K,254 38 m,301 35 n,355 50 K,414 84 R,462 89 n,505 87 t,549 81 b,593 77 T,637 72 g,680 75 r,723 75 T,766 75 t,811 72 g,860 75 B,903 72 O,945 72 k,989 77 g,1033 72 r,1076 75 K,1119 72 y,1163 70 o,1206 59 g,1254 62 g,1305 67 N,1350 67 N,1392 59 Y,1434 50 N,1477 36 O,61 122 P,104 110 y,146 99 O,189 98 N,235 96 m,278 90 m,322 87 o,375 104 T,437 140 P,485 140 g,530 135 B,574 128 N,619 128 t,661 126 m,704 129 K,746 129 k,789 129 R,835 126 Y,881 129 g,926 128 K,970 131 G,1015 128 R,1057 128 m,1102 131 O,1144 126 o,1187 122 g,1229 110 p,1280 113 O,1322 122 y,1365 125 b,1409 116 k,1452 104 T,1494 92 P,83 174 o,125 164 k,168 152 B,212 152 K,256 149 y,299 144 r,341 141 P,394 159 P,460 188 R,511 189 O,555 183 b,597 180 g,640 182 G,684 183 b,729 185 K,771 182 k,814 179 M,858 176 R,902 182 y,947 185 p,994 182 k,1038 185 P,1081 185 g,1125 182 O,1167 176 b,1210 176 b,1252 161 K,1294 171 Y,1337 179 Y,1381 182 n,1424 176 R,1466 164 m,102 231 T,144 218 g,189 206 m,231 206 k,273 206 B,318 200 T,360 195 K,419 210 k,484 240 r,528 246 t,576 234 O,621 237 n,663 236 m,706 237 K,748 237 T,792 237 t,835 231 g,879 234 Y,922 234 K,972 232 n,1015 237 g,1059 240 t,1104 237 G,1151 231 B,1193 228 B,1240 219 m,1282 231 t,1324 240 M,1369 242 t,1411 234 m,1456 225 o,125 282 k,167 272 r,210 261 K,254 261 p,299 255 n,341 252 G,386 246 G,444 257 R,410 297 r,474 297 N,517 306 n,559 291 m,604 291 m,646 295 p,689 294 k,731 297 Y,775 294 y,818 285 G,858 306 M,901 288 m,947 285 o,994 288 K,1037 291 T,1085 288 y,1129 285 o,1174 282 Y,1218 273 M,1261 285 M,1305 295 b,1348 297 T,1390 294 t,1432 289 y,1475 279 t,148 330 P,190 323 b,233 315 P,278 312 M,322 306 P,365 300 B,108 353 g,214 374 k,172 380 G,256 366 y,303 360 m,347 357 p,390 351 O,443 338 T,484 357 M,527 365 b,568 351 G,610 351 O,654 354 B,697 354 n,739 357 T,782 354 Y,824 345 y,883 357 b,924 336 N,968 339 m,1012 342 R,1061 339 R,1108 339 k,1155 336 N,1201 330 P,1244 342 p,1287 351 B,1331 354 r,1375 349 T,1418 345 t,131 405 Y,197 432 o,239 423 R,284 414 G,326 411 K,373 405 r,422 393 M,464 411 m,506 420 K,551 417 T,593 405 r,636 408 T,678 408 g,721 411 o,765 411 B,807 405 N,852 396 B,905 408 k,945 390 t,990 393 k,1038 391 b,1087 390 N,1134 387 b,1182 384 G,1225 399 r,1267 405 k,1310 408 y,1356 405 o,1399 402 n,157 456 o,225 480 B,267 471 N,309 468 n,354 462 k,403 447 p,445 468 y,488 474 G,530 471 O,572 468 p,615 462 t,657 462 b,701 462 p,745 462 M,786 462 m,831 458 K,872 450 K,936 449 P,979 453 O,1024 450 N,1066 447 K,1110 441 R,1159 435 N,1202 450 G,1245 456 M,1288 459 K,1333 459 O,1380 456 N,182 504 B,250 528 B,294 525 G,337 519 B,386 501 p,426 522 m,468 528 K,511 528 O,553 522 K,596 519 P,638 516 B,680 516 p,725 516 M,767 519 m,811 513 K,856 507 P,903 489 n,956 504 b,1002 504 t,1047 501 k,1091 495 k,1138 489 t,1181 504 P,1225 510 N,1267 513 G,1312 513 g,1356 510 G,212 552 b,246 588 R,288 585 T,331 582 t,371 558 B,411 579 O,453 585 t,496 585 n,540 582 y,583 576 p,625 576 Y,667 576 G,710 573 o,752 579 b,797 573 N,839 561 n,888 546 b,930 555 B,979 558 T,1028 555 K,1074 549 p,1119 543 k,1161 558 n,1204 567 b,1248 567 P,1291 567 m,1335 564 T,242 651 N,286 645 Y,329 653 y,365 618 T,403 639 r,447 645 m,490 645 t,534 642 Y,576 636 b,619 633 t,661 633 O,704 633 o,746 639 P,789 633 R,831 621 r,872 603 B,913 624 Y,954 606 M,1004 606 R,1053 603 B,1100 600 y,1142 615 g,1187 624 P,1229 621 m,1272 621 M,269 702 O,312 711 Y,352 732 G,369 678 O,409 699 n,451 705 o,494 705 b,538 702 T,581 696 g,625 693 n,667 693 B,710 693 b,754 696 m,795 690 y,838 681 K,878 663 k,939 672 g,981 654 o,1030 657 o,1079 654 y,1121 669 B,1163 678 p,1208 675 y,1252 672 p,392 756 n,436 762 G,478 762 o,521 762 m,566 753 T,608 750 N,650 747 k,693 753 r,737 753 P,780 747 K,822 738 k,864 726 O,907 708 G,962 723 Y,1004 705 G,1055 705 K,1098 720 m,1140 729 g,1189 726 Y,1231 726 P,373 810 M,417 819 R,460 816 p,502 816 M,547 813 m,589 804 K,631 801 y,674 807 b,716 807 N,760 804 Y,803 801 P,845 789 k,888 777 O,928 759 t,989 771 O,1030 753 N,1070 765 M,1112 777 k,1165 780 o,527 870 R,570 864 k,612 858 b,657 864 t,699 864 N,743 858 K,785 858 k,828 849 g,871 840 N,913 828 m,956 807 g,1021 813 Y,945 867 p,987 849 t,1064 828 K,1108 837 K,1153 837 p,1034 870 y,562 924 r,606 918 M,648 924 p,691 924 N,735 918 K,778 918 T,822 909 Y,864 900 g,905 885 O,1000 909 Y';

type Dot = { x: number; y: number; c: string };

const buildDots = (): Dot[] => {
    const dots: Dot[] = [];
    const add = (x: number, y: number, c: string) => {
        if (!dots.some(d => Math.hypot(d.x - x, d.y - y) < 13)) dots.push({ x, y, c });
    };
    const read = (src: string, ox: number, oy: number, sx: number, sy: number) => {
        src.split(',').forEach(part => {
            const [zx, zy, k] = part.split(' ');
            add(ox + Number(zx) / sx, oy + Number(zy) / sy, palette[k]);
        });
    };
    read(upperRight, 700, 230, 3, 3);
    read(upperLeft, 460, 230, 3, 3);
    read(tooltipEdge, 640, 440, 3, 3);
    read(lower, 470, 620, 2.12, 3);
    // left flank, the stretch no crop covered
    let seed = 17;
    for (let row = 0; row < 9; row++) {
        const y = 475 + row * 18.300;
        for (let col = 0; col < 12; col++) {
            const x = 488 + col * 20.400 + (row % 2) * 10;
            seed = (seed * 1103515245 + 12345) % 2147483648;
            if (x < (y < 500 ? 505 : 488)) continue;
            add(x, y, palette[palKeys[Math.floor(seed / 65536) % 20]]);
        }
    }
    return dots;
};
const dots = buildDots();

const BubbleChart = () => (
    <Svg width={1245} height={716} viewBox="466 241 1245 716" stroke="none">
        {dots.map((d, i) => <circle key={i} cx={d.x} cy={d.y} r={9.700} fill={d.c} stroke="none" />)}
        <circle cx={663} cy={468} r={9.700} fill="#b07aa1" stroke="#111" strokeWidth={1} />
    </Svg>
);

const fields: [string, 'abc' | 'geo' | 'date' | 'num' | 'calc', boolean?][] = [
    ['City', 'geo'], ['Country', 'geo'], ['Country Code', 'geo'], ['Course Name', 'abc'], ['Cuisine Name', 'abc'], ['Customer ID', 'abc'],
    ['Customer Name', 'abc'], ['Delivery Date', 'date'], ['Desert Name', 'abc'], ['Drink', 'abc'], ['Order Date', 'date'], ['Order ID', 'abc'],
    ['Postal Code', 'geo'], ['Row Number', 'num'], ['Sides', 'abc'], ['Starter Name', 'abc'], ['Measure Names', 'abc', true],
];
const measures: [string, 'geo' | 'num' | 'calc', boolean?][] = [
    ['Cost', 'num'], ['Delivery Cost', 'num'], ['Discount', 'num'], ['Profit', 'calc'], ['Quantity', 'num'], ['Sales', 'num'],
    ['Latitude (generated)', 'geo', true], ['Longitude (generated)', 'geo', true], ['Orders (Count)', 'num', true], ['Measure Values', 'num', true],
];
const legendRows: [string, string][] = [
    ['Alexandros Brookfi..', '#f1ce63'], ['Alexia Candelin', '#499894'], ['Alfreda Chasmer', '#86bcb6'], ['Ali Einchcombe', '#e15759'], ['Alida Dumphy', '#ff9d9a'],
    ['Alisander Cornelisse', '#79706e'], ['Alisander Shoebot..', '#bab0ac'], ['Alison Jamieson', '#d37295'], ['Alistair Stannard', '#fabfd2'],
];

const FieldGlyph = ({ kind }: { kind: string }) => {
    if (kind === 'abc') return <>Abc</>;
    if (kind === 'geo') return <Globe />;
    if (kind === 'date') return <Calendar />;
    if (kind === 'calc') return <CalcHash />;
    return <Hash />;
};

const App = () => (
    <Page>
        <Global />
        <TitleBar>
            <Logo />
            <TitleText>Tableau - Book1 - Tableau license expires in 11 days</TitleText>
            <WinBtns>
                <Svg width={14} height={14} viewBox="0 0 14 14"><path d="M1 7h12" /></Svg>
                <Svg width={14} height={14} viewBox="0 0 14 14"><path d="M1 3.500h9.500V13H1zM3.500 3.500V1H13v9.500h-2.500" /></Svg>
                <Svg width={14} height={14} viewBox="0 0 14 14"><path d="m1 1 12 12M13 1 1 13" /></Svg>
            </WinBtns>
        </TitleBar>
        <Menu>
            <span><u>F</u>ile</span><span><u>D</u>ata</span><span><u>W</u>orksheet</span><span>Dash<u>b</u>oard</span><span>S<u>t</u>ory</span>
            <span><u>A</u>nalysis</span><span><u>M</u>ap</span><span>F<u>o</u>rmat</span><span><u>S</u>erver</span><span>Wi<u>n</u>dow</span><span><u>H</u>elp</span>
        </Menu>
        <Toolbar>
            <Slot $w={50}><Home /></Slot>
            <Slot $w={6}><Sep /></Slot>
            <Slot $w={48}><Back /></Slot>
            <Slot $w={30} $off><Fwd /></Slot>
            <Slot $w={44}><Cycle /></Slot>
            <Slot $w={6}><Caret /></Slot>
            <Slot $w={44}><Save /></Slot>
            <Slot $w={32}><Db mark="plus" /></Slot>
            <Slot $w={44}><Db mark="pause" /></Slot>
            <Slot $w={4}><Caret /></Slot>
            <Slot $w={42} $off><Refresh /></Slot>
            <Slot $w={8}><Caret $off /></Slot>
            <Slot $w={22}><Sep /></Slot>
            <Slot $w={28}><NewSheet /></Slot>
            <Slot $w={20}><Caret /></Slot>
            <Slot $w={30}><DupSheet /></Slot>
            <Slot $w={44}><ClearSheet /></Slot>
            <Slot $w={6}><Caret /></Slot>
            <Slot $w={24}><Sep /></Slot>
            <Slot $w={28} $off><SwapAxes /></Slot>
            <Slot $w={52}><SortAsc /></Slot>
            <Slot $w={24}><SortDesc /></Slot>
            <Slot $w={34}><Sep /></Slot>
            <Slot $w={20}><Marker /></Slot>
            <Slot $w={22}><Caret /></Slot>
            <Slot $w={28} $off><Clip /></Slot>
            <Slot $w={20}><Caret $off /></Slot>
            <Slot $w={37} $on><TBox /></Slot>
            <Slot $w={34} $off><Pin /></Slot>
            <Combo>
                <ComboText>Standard</ComboText>
                <ComboCaret><Caret /></ComboCaret>
            </Combo>
            <Slot $w={34}><Sep /></Slot>
            <Slot $w={20}><Fit /></Slot>
            <Slot $w={21}><Caret /></Slot>
            <Slot $w={37} $on><Present /></Slot>
            <Slot $w={18}><Sep /></Slot>
            <Slot $w={36}><Share /></Slot>
            <Spring />
            <Slot $w={40}><Sign /></Slot>
            <ShowMeTab><BarsIco />Show Me</ShowMeTab>
        </Toolbar>
        <Main>
            <DataPanel>
                <TabsRow>
                    <DataTab>Data</DataTab>
                    <AnalyticsTab>Analytics<Chevron /></AnalyticsTab>
                </TabsRow>
                <SourceRow><Orders />Orders (LittleLemon_data)</SourceRow>
                <SearchRow>
                    <SearchBox>Search<Lens /></SearchBox>
                    <Spacer $w={3} />
                    <Funnel />
                    <SearchSep />
                    <Lines />
                    <Spacer $w={8} />
                    <Caret />
                </SearchRow>
                <GroupTitle>Tables</GroupTitle>
                {fields.map(([name, kind, italic], i) => (
                    <FieldRow key={name} $italic={italic} $rule={i === fields.length - 1}>
                        <FieldIcon><FieldGlyph kind={kind} /></FieldIcon>{name}
                    </FieldRow>
                ))}
                {measures.map(([name, kind, italic]) => (
                    <FieldRow key={name} $italic={italic}>
                        <FieldIcon $green><FieldGlyph kind={kind} /></FieldIcon>{name}
                    </FieldRow>
                ))}
            </DataPanel>
            <MidColumn>
                <Card $h={70}><CardTitle>Pages</CardTitle></Card>
                <Card $h={92}><CardTitle>Filters</CardTitle></Card>
                <Card $h={341}>
                    <CardTitle>Marks</CardTitle>
                    <MarkSelect>
                        <Svg width={10} height={10} viewBox="0 0 10 10" stroke="#999"><circle cx="5" cy="5" r="4" /></Svg>
                        Circle
                        <MarkSelectCaret><Caret /></MarkSelectCaret>
                    </MarkSelect>
                    <MarkGrid>
                        <MarkBtn><Dots s={24} />Color</MarkBtn>
                        <MarkBtn><SizeIco s={24} />Size</MarkBtn>
                        <MarkBtn><LabelIco s={24} />Label</MarkBtn>
                        <MarkBtn><DetailIco />Detail</MarkBtn>
                        <MarkBtn><TipIco s={24} />Tooltip</MarkBtn>
                    </MarkGrid>
                    <PillRows>
                        <PillRow><PillIcon><Dots s={16} /></PillIcon><Pill>Customer Name</Pill></PillRow>
                        <PillRow><PillIcon><SizeIco s={16} /></PillIcon><Pill $measure>SUM(Sales)</Pill></PillRow>
                        <PillRow><PillIcon><TipIco s={16} /></PillIcon><Pill $measure>SUM(Profit)</Pill></PillRow>
                        <PillRow><PillIcon><LabelIco s={16} /></PillIcon><Pill>Customer Name</Pill></PillRow>
                    </PillRows>
                </Card>
            </MidColumn>
            <Work>
                <Shelves>
                    <Shelf>
                        <ShelfLabel>
                            <Svg width={14} height={14} viewBox="0 0 14 14" strokeWidth={2}><path d="M3 3v9M7 3v9M11 3v9" /></Svg>
                            Columns
                        </ShelfLabel>
                    </Shelf>
                    <Shelf>
                        <ShelfLabel>
                            <Svg width={14} height={14} viewBox="0 0 14 14" strokeWidth={1.500}><path d="M1 3h12M1 7h12M1 11h12" /></Svg>
                            Rows
                        </ShelfLabel>
                    </Shelf>
                </Shelves>
                <Stage>
                    <Canvas>
                        <ChartTitle>Sales Bubble Chart</ChartTitle>
                        <BubbleChart />
                        <Tip>
                            <span>Customer Name:</span><TipValue>Gawain Willmont</TipValue>
                            <span>Profit:</span><TipValue>1,483.8</TipValue>
                            <span>Sales:</span><TipValue>4,451.4</TipValue>
                        </Tip>
                    </Canvas>
                    <Legend>
                        <LegendList>
                            {legendRows.map(([name, c]) => (
                                <LegendRow key={name}><Swatch $c={c} />{name}</LegendRow>
                            ))}
                        </LegendList>
                        <ScrollBar>
                            <Svg width={12} height={12} viewBox="0 0 12 12" strokeWidth={1.800}><path d="m2 4 4 4 4-4" /></Svg>
                        </ScrollBar>
                    </Legend>
                </Stage>
            </Work>
        </Main>
        <SheetTabs>
            <SheetTab $w={159}>
                <Svg width={10} height={14} viewBox="0 0 10 14"><path d="M1 3c0-2 8-2 8 0v8c0 2-8 2-8 0zM1 4.500c2 1 6 1 8 0" /></Svg>
                Data Source
            </SheetTab>
            <SheetTab $w={130}>Customer Sales</SheetTab>
            <SheetTab $w={100}>Profit Chart</SheetTab>
            <SheetTab $w={152} $on>Sales Bubble Chart</SheetTab>
            <AddTab><NewSheet /></AddTab>
            <AddTab>
                <Icon><path d="M3 3h12v11H3zM3 8.500h12M9 3v11" /><path d="M15 12v7M11.500 15.500h7" strokeWidth={2} stroke="#333" /></Icon>
            </AddTab>
            <AddTab>
                <Icon><path d="M3 3l4 2 4-2v11l-4 2-4-2zM7 5v11M11 3l3 2v6" /><path d="M15 12v7M11.500 15.500h7" strokeWidth={2} stroke="#333" /></Icon>
            </AddTab>
        </SheetTabs>
        <ShowMe>
            <ThumbGrid>
                {thumbs.map((art, i) => (
                    <Thumb key={i} $on={i === 6}>
                        <ThumbArt viewBox="0 0 69 52">{art}</ThumbArt>
                    </Thumb>
                ))}
            </ThumbGrid>
            <Hint>For <b>horizontal bars</b> try</Hint>
            <HintRow>0 or more<HintPill $w={113}>Dimensions</HintPill></HintRow>
            <HintRow>1 or more<HintPill $w={98} $measure>Measures</HintPill></HintRow>
        </ShowMe>
    </Page>
);

export default App;
